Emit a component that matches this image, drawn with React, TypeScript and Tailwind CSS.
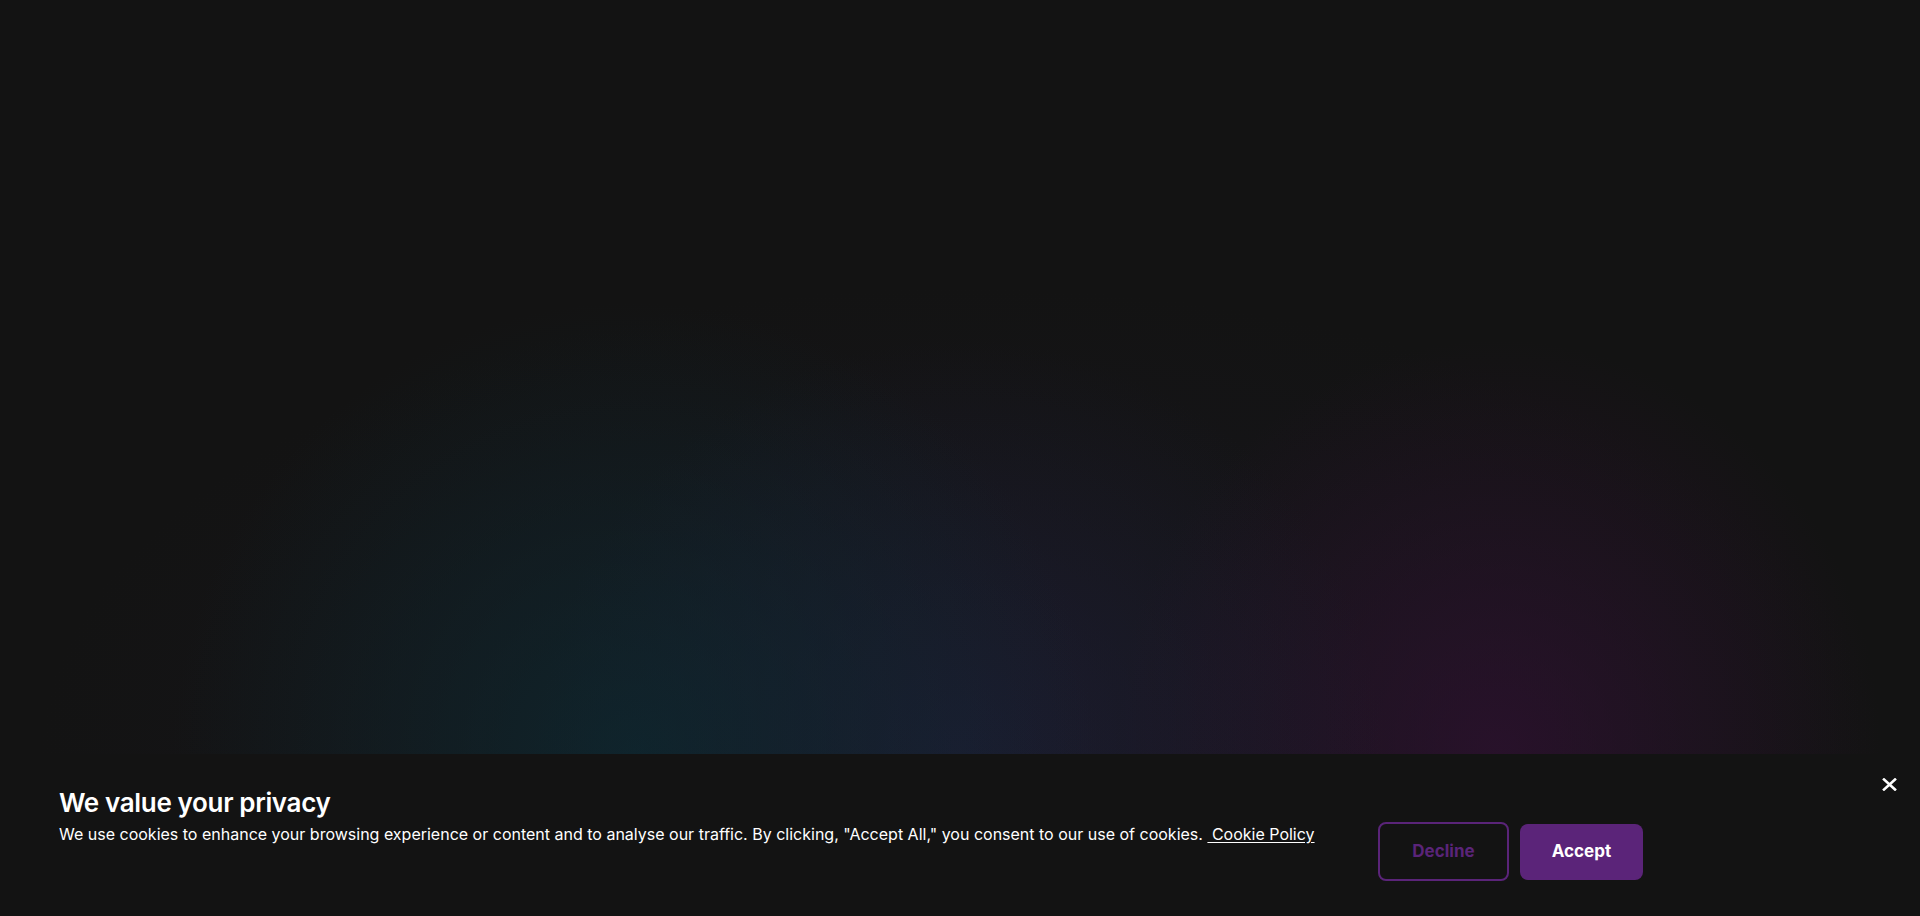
export default function App() {
  return (
    <div className="h-screen w-full flex flex-col bg-[#131313] overflow-hidden font-['Inter',sans-serif]">
      {/* Hero glow */}
      <div className="flex-1 bg-[radial-gradient(ellipse_24%_60%_at_33%_100%,rgba(12,42,50,0.7),transparent),radial-gradient(ellipse_22%_55%_at_50%_100%,rgba(30,32,62,0.55),transparent),radial-gradient(ellipse_20%_55%_at_78%_100%,rgba(48,16,50,0.7),transparent),radial-gradient(ellipse_48%_62%_at_50%_100%,rgba(28,26,40,0.55),transparent)]" />

      {/* Cookie banner */}
      <div className="h-[162px] shrink-0 bg-[#131313] flex items-start pl-[59px] pr-[23px]">
        <div className="w-[1319px] shrink-0 mt-[33px] whitespace-nowrap">
          <h2 className="text-[26px] leading-[32px] font-semibold text-white tracking-[-0.35px]">
            We value your privacy
          </h2>
          <p className="mt-[3px] text-[16px] leading-[24px] text-white">
            We use cookies to enhance your browsing experience or content and to analyse our traffic. By clicking, "Accept All," you consent to our use of cookies.{" "}
            <a href="#" className="underline underline-offset-2">
              &nbsp;Cookie Policy
            </a>
          </p>
        </div>
        <div className="mt-[68px] flex items-center gap-[11px]">
          <button className="w-[131px] h-[59px] rounded-[8px] border-2 border-[#5a2479] text-[#5a2479] text-[17px] font-bold">
            Decline
          </button>
          <button className="w-[123px] h-[56px] rounded-[8px] bg-[#5b2479] text-white text-[17px] font-bold">
            Accept
          </button>
        </div>
        <button className="ml-auto mt-[22px] w-[16px] h-[16px] flex items-center justify-center text-white">
          <svg width="15" height="13" viewBox="0 0 15 13" fill="none" stroke="currentColor" strokeWidth="2.6" strokeLinecap="square">
            <path d="M2 1.5L13 11.5M13 1.5L2 11.5" />
          </svg>
        </button>
      </div>
    </div>
  );
}
